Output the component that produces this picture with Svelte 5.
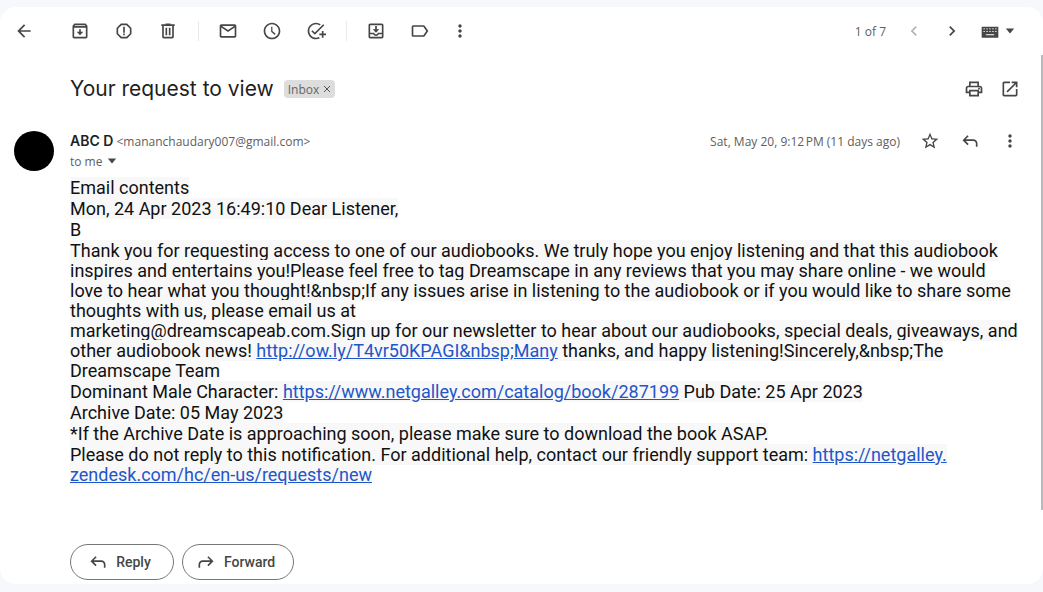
<script>
  const icons = {
    back: 'M20 11H7.83l5.59-5.59L12 4l-8 8 8 8 1.41-1.41L7.83 13H20v-2z',
    archive: 'M20.54 5.23l-1.39-1.68C18.88 3.21 18.47 3 18 3H6c-.47 0-.88.21-1.16.55L3.46 5.23C3.17 5.57 3 6.02 3 6.5V19c0 1.1.9 2 2 2h14c1.1 0 2-.9 2-2V6.5c0-.48-.17-.93-.46-1.27zM6.24 5h11.52l.83 1H5.42l.82-1zM5 19V8h14v11H5zm6-9h2v3h3l-4 4-4-4h3z',
    spam: 'M15.73 3H8.27L3 8.27v7.46L8.27 21h7.46L21 15.73V8.27L15.73 3zM19 14.9L14.9 19H9.1L5 14.9V9.1L9.1 5h5.8L19 9.1v5.8zM11 7h2v7h-2zM11 15h2v2h-2z',
    trash: 'M15 4V3H9v1H4v2h1v13c0 1.1.9 2 2 2h10c1.1 0 2-.9 2-2V6h1V4h-5zm2 15H7V6h10v13zM9 8h2v9H9zM13 8h2v9h-2z',
    mail: 'M20 4H4c-1.1 0-2 .9-2 2v12c0 1.1.9 2 2 2h16c1.1 0 2-.9 2-2V6c0-1.1-.9-2-2-2zm-.8 2L12 10.8 4.8 6h14.4zM4 18V7.87l8 5.33 8-5.33V18H4z',
    clock: 'M12 2C6.5 2 2 6.5 2 12s4.5 10 10 10 10-4.5 10-10S17.5 2 12 2zm0 18c-4.41 0-8-3.59-8-8s3.59-8 8-8 8 3.59 8 8-3.59 8-8 8zm.5-13H11v6l4.2 3.8 1.1-1.4-3.8-3.3V7z',
    task: 'M22 5.18L10.59 16.6l-4.24-4.24 1.41-1.41 2.83 2.83 10-10L22 5.18zM12 20c-4.41 0-8-3.59-8-8s3.59-8 8-8c1.57 0 3.04.46 4.28 1.25l1.45-1.45A10.02 10.02 0 0 0 12 2C6.48 2 2 6.48 2 12s4.48 10 10 10c1.73 0 3.36-.44 4.78-1.22l-1.5-1.5c-1 .46-2.11.72-3.28.72zm7-5h-3v2h3v3h2v-3h3v-2h-3v-3h-2v3z',
    move: 'M19 3H5c-1.1 0-2 .9-2 2v14c0 1.1.9 2 2 2h14c1.1 0 2-.9 2-2V5c0-1.1-.9-2-2-2zm0 16H5v-3h3.56c.69 1.19 1.97 2 3.45 2s2.75-.81 3.45-2H19v3zm0-5h-4.99c0 1.1-.9 2-2 2s-2-.9-2-2H5V5h14v9zm-3-4h-3V6h-2v4H8l4 4z',
    label: 'M16 5H4c-1.1 0-2 .9-2 2v10c0 1.1.9 2 2 2h12c.67 0 1.27-.33 1.63-.84L22 12l-4.37-6.16C17.27 5.33 16.67 5 16 5zm0 12H4V7h12l3.55 5L16 17z',
    more: 'M12 8c1.1 0 2-.9 2-2s-.9-2-2-2-2 .9-2 2 .9 2 2 2zm0 2c-1.1 0-2 .9-2 2s.9 2 2 2 2-.9 2-2-.9-2-2-2zm0 6c-1.1 0-2 .9-2 2s.9 2 2 2 2-.9 2-2-.9-2-2-2z',
    prev: 'M15.41 7.41L14 6l-6 6 6 6 1.41-1.41L10.83 12z',
    next: 'M10 6L8.59 7.41 13.17 12l-4.58 4.59L10 18l6-6z',
    keyboard: 'M2 7h20v13H2zM4 9v1h2V9zm3.500 0v1h2V9zm3.500 0v1h2V9zm3.500 0v1h2V9zM18 9v1h2V9zM4 12.300v1h2v-1zm3.500 0v1h2v-1zm3.500 0v1h2v-1zm3.500 0v1h2v-1zm3.500 0v1h2v-1zM7 16v1h10v-1z',
    print: 'M19 8h-1V3H6v5H5c-1.66 0-3 1.34-3 3v6h4v4h12v-4h4v-6c0-1.66-1.34-3-3-3zM8 5h8v3H8V5zm8 14H8v-4h8v4zm2-4v-2H6v2H4v-4c0-.55.45-1 1-1h14c.55 0 1 .45 1 1v4h-2zM17 10.500h2v2h-2z',
    open: 'M19 19H5V5h7V3H5c-1.11 0-2 .9-2 2v14c0 1.1.89 2 2 2h14c1.1 0 2-.9 2-2v-7h-2v7zM14 3v2h3.590l-9.830 9.830 1.410 1.410L19 6.410V10h2V3h-7z',
    star: 'M22 9.240l-7.190-.62L12 2 9.190 8.630 2 9.240l5.460 4.730L5.820 21 12 17.270 18.180 21l-1.630-7.030L22 9.240zM12 15.400l-3.760 2.270 1-4.280-3.320-2.880 4.380-.38L12 6.100l1.710 4.040 4.380.38-3.320 2.880 1 4.280L12 15.400z',
    reply: 'M19 19v-4c0-1.660-1.340-3-3-3H6.830l3.580 3.590L9 17l-6-6 6-6 1.410 1.410L6.830 10H16c2.760 0 5 2.240 5 5v4h-2z',
    forward: 'M5 19v-4c0-1.660 1.340-3 3-3h9.170l-3.580 3.590L15 17l6-6-6-6-1.410 1.410L17.170 10H8c-2.760 0-5 2.240-5 5v4h2z',
    caret: 'M7 9l5 6 5-6z',
  };
  const triage = [['archive', 'Archive'], ['spam', 'Report spam'], ['trash', 'Delete']];
  const marks = [['mail', 'Mark as unread'], ['clock', 'Snooze'], ['task', 'Add to Tasks']];
  const filing = [['move', 'Move to'], ['label', 'Labels']];
</script>

{#snippet icon(name)}
  <svg viewBox="0 0 24 24" aria-hidden="true"><path fill-rule="evenodd" d={icons[name]} /></svg>
{/snippet}

{#snippet tool(name, label)}
  <button class="tool {name}" aria-label={label}>{@render icon(name)}</button>
{/snippet}

{#snippet group(items)}
  <div class="group">
    {#each items as [name, label]}{@render tool(name, label)}{/each}
  </div>
{/snippet}

<main>
  <header class="toolbar">
    {@render tool('back', 'Back to Inbox')}
    {@render group(triage)}
    <span class="rule"></span>
    {@render group(marks)}
    <span class="rule"></span>
    {@render group(filing)}
    {@render tool('more', 'More')}
    <div class="pager">
      <span class="count">1 of 7</span>
      {@render tool('prev', 'Newer')}
      {@render tool('next', 'Older')}
      <button class="input-tools" aria-label="Select input tool">{@render icon('keyboard')}{@render icon('caret')}</button>
    </div>
  </header>

  <div class="pane">
    <div class="thread">
      <div class="subject">
        <h1>Your request to view</h1>
        <span class="chip">Inbox <button aria-label="Remove label Inbox"><svg viewBox="0 0 8 8" aria-hidden="true"><path d="M1 1l6 6M7 1L1 7" /></svg></button></span>
        <div class="actions">
          {@render tool('print', 'Print all')}
          {@render tool('open', 'In new window')}
        </div>
      </div>

      <article>
        <div class="avatar"></div>
        <div class="message">
          <div class="sender">
            <div class="from"><strong>ABC D</strong> <span class="address">&lt;mananchaudary007@gmail.com&gt;</span></div>
            <time>Sat, May 20, 9:12&#8239;PM (11 days ago)</time>
            <div class="actions">
              {@render tool('star', 'Star')}
              {@render tool('reply', 'Reply')}
              {@render tool('more', 'More')}
            </div>
          </div>
          <button class="to">to me {@render icon('caret')}</button>

          <div class="body">
            <p><span>Email contents</span></p>
            <p><span>Mon, 24 Apr 2023 16:49:10 Dear Listener,</span></p>
            <p>B</p>
            <p><span>Thank you for requesting access to one of our audiobooks. We truly hope you enjoy listening and that this audiobook inspires and entertains you!Please feel free to tag Dreamscape in any reviews that you may share online - we would love to hear what you thought!&amp;nbsp;If any issues arise in listening to the audiobook or if you would like to share some thoughts with us, please email us at<br />marketing@dreamscapeab.com.Sign up for our newsletter to hear about our audiobooks, special deals, giveaways, and other audiobook news! <a href="http://ow.ly/T4vr50KPAGI">http://ow.ly/T4vr50KPAGI&amp;nbsp;Many</a> thanks, and happy listening!Sincerely,&amp;nbsp;The Dreamscape Team</span></p>
            <p><span>Dominant Male Character: <a href="https://www.netgalley.com/catalog/book/287199">https://www.netgalley.com/catalog/book/287199</a> Pub Date: 25 Apr 2023</span></p>
            <p><span>Archive Date: 05 May 2023</span></p>
            <p><span>*If the Archive Date is approaching soon, please make sure to download the book ASAP.</span></p>
            <p><span>Please do not reply to this notification. For additional help, contact our friendly support team: <a href="https://netgalley.zendesk.com/hc/en-us/requests/new">https://netgalley.<wbr />zendesk.com/hc/en-us/requests/new</a></span></p>
          </div>

          <div class="respond">
            <button>{@render icon('reply')}Reply</button>
            <button>{@render icon('forward')}Forward</button>
          </div>
        </div>
      </article>
    </div>
    <div class="thumb"></div>
  </div>
</main>

<style>
  :global(body) {
    background: #f6f8fc;
    padding: 7px 0 8px;
  }
  main {
    background: #fff;
    border-radius: 16px;
    font-family: "Open Sans", Roboto, sans-serif;
    font-size: 12px;
    color: #5e5e5e;
  }
  button {
    font: inherit;
    color: inherit;
    background: none;
    border: 0;
    padding: 0;
    cursor: pointer;
  }
  svg {
    display: block;
    width: 20px;
    height: 20px;
    fill: #444746;
    flex: none;
  }
  .toolbar {
    display: flex;
    align-items: center;
    gap: 20px;
    height: 48px;
    padding: 0 23px 0 14px;
  }
  .back {
    margin-right: 16px;
  }
  .group {
    display: flex;
    gap: 24px;
  }
  .rule {
    width: 1px;
    height: 20px;
    margin-right: -1px;
    background: #e8eaed;
  }
  .pager {
    display: flex;
    align-items: center;
    gap: 18px;
    margin-left: auto;
  }
  .prev svg {
    fill: #b4b5b5;
  }
  .input-tools {
    display: flex;
    align-items: center;
  }
  .pane {
    display: flex;
  }
  .thread {
    flex: 1;
    min-width: 0;
    padding: 16px 21px 4px 14px;
  }
  .thumb {
    width: 2px;
    height: 455px;
    align-self: flex-start;
    background: #b8b9ba;
  }
  .subject {
    display: flex;
    align-items: center;
    gap: 10px;
    height: 36px;
    padding-left: 56px;
  }
  h1 {
    margin: 0;
    font-family: Inter, sans-serif;
    font-size: 21px;
    line-height: 28px;
    font-weight: 400;
    color: #1f1f1f;
  }
  .chip {
    display: flex;
    align-items: center;
    gap: 4px;
    height: 18px;
    padding: 0 4px;
    border-radius: 4px;
    background: #ddd;
    color: #666;
  }
  .chip svg {
    width: 8px;
    height: 8px;
    stroke: #555;
  }
  .actions {
    display: flex;
    gap: 20px;
    margin-left: auto;
  }
  .subject .actions {
    gap: 16px;
  }
  article {
    display: flex;
    gap: 16px;
    padding-top: 24px;
  }
  .avatar {
    width: 40px;
    height: 40px;
    border-radius: 50%;
    background: #000;
    flex: none;
  }
  .message {
    flex: 1;
    min-width: 0;
  }
  .sender {
    display: flex;
    align-items: center;
    height: 20px;
  }
  .from {
    flex: 1;
  }
  strong {
    font-family: Inter, sans-serif;
    font-size: 14px;
    font-weight: 600;
    color: #1f1f1f;
  }
  .sender .actions {
    margin-left: 20px;
  }
  .to {
    display: flex;
    align-items: center;
    height: 20px;
  }
  .body {
    margin-top: 7px;
    font-family: Roboto, sans-serif;
    font-size: 18px;
    line-height: 20px;
    color: #111;
  }
  p {
    margin: 0 0 1px;
  }
  p span {
    background: #f8f8f8;
  }
  a {
    color: #1f56c8;
  }
  .respond {
    display: flex;
    gap: 8px;
    margin-top: 59px;
  }
  .respond button {
    display: flex;
    align-items: center;
    justify-content: center;
    gap: 8px;
    min-width: 104px;
    height: 36px;
    padding: 0 18px 0 13px;
    border: 1px solid #747775;
    border-radius: 18px;
    font-family: Roboto, sans-serif;
    font-size: 14px;
    font-weight: 500;
    color: #444746;
  }
</style>
